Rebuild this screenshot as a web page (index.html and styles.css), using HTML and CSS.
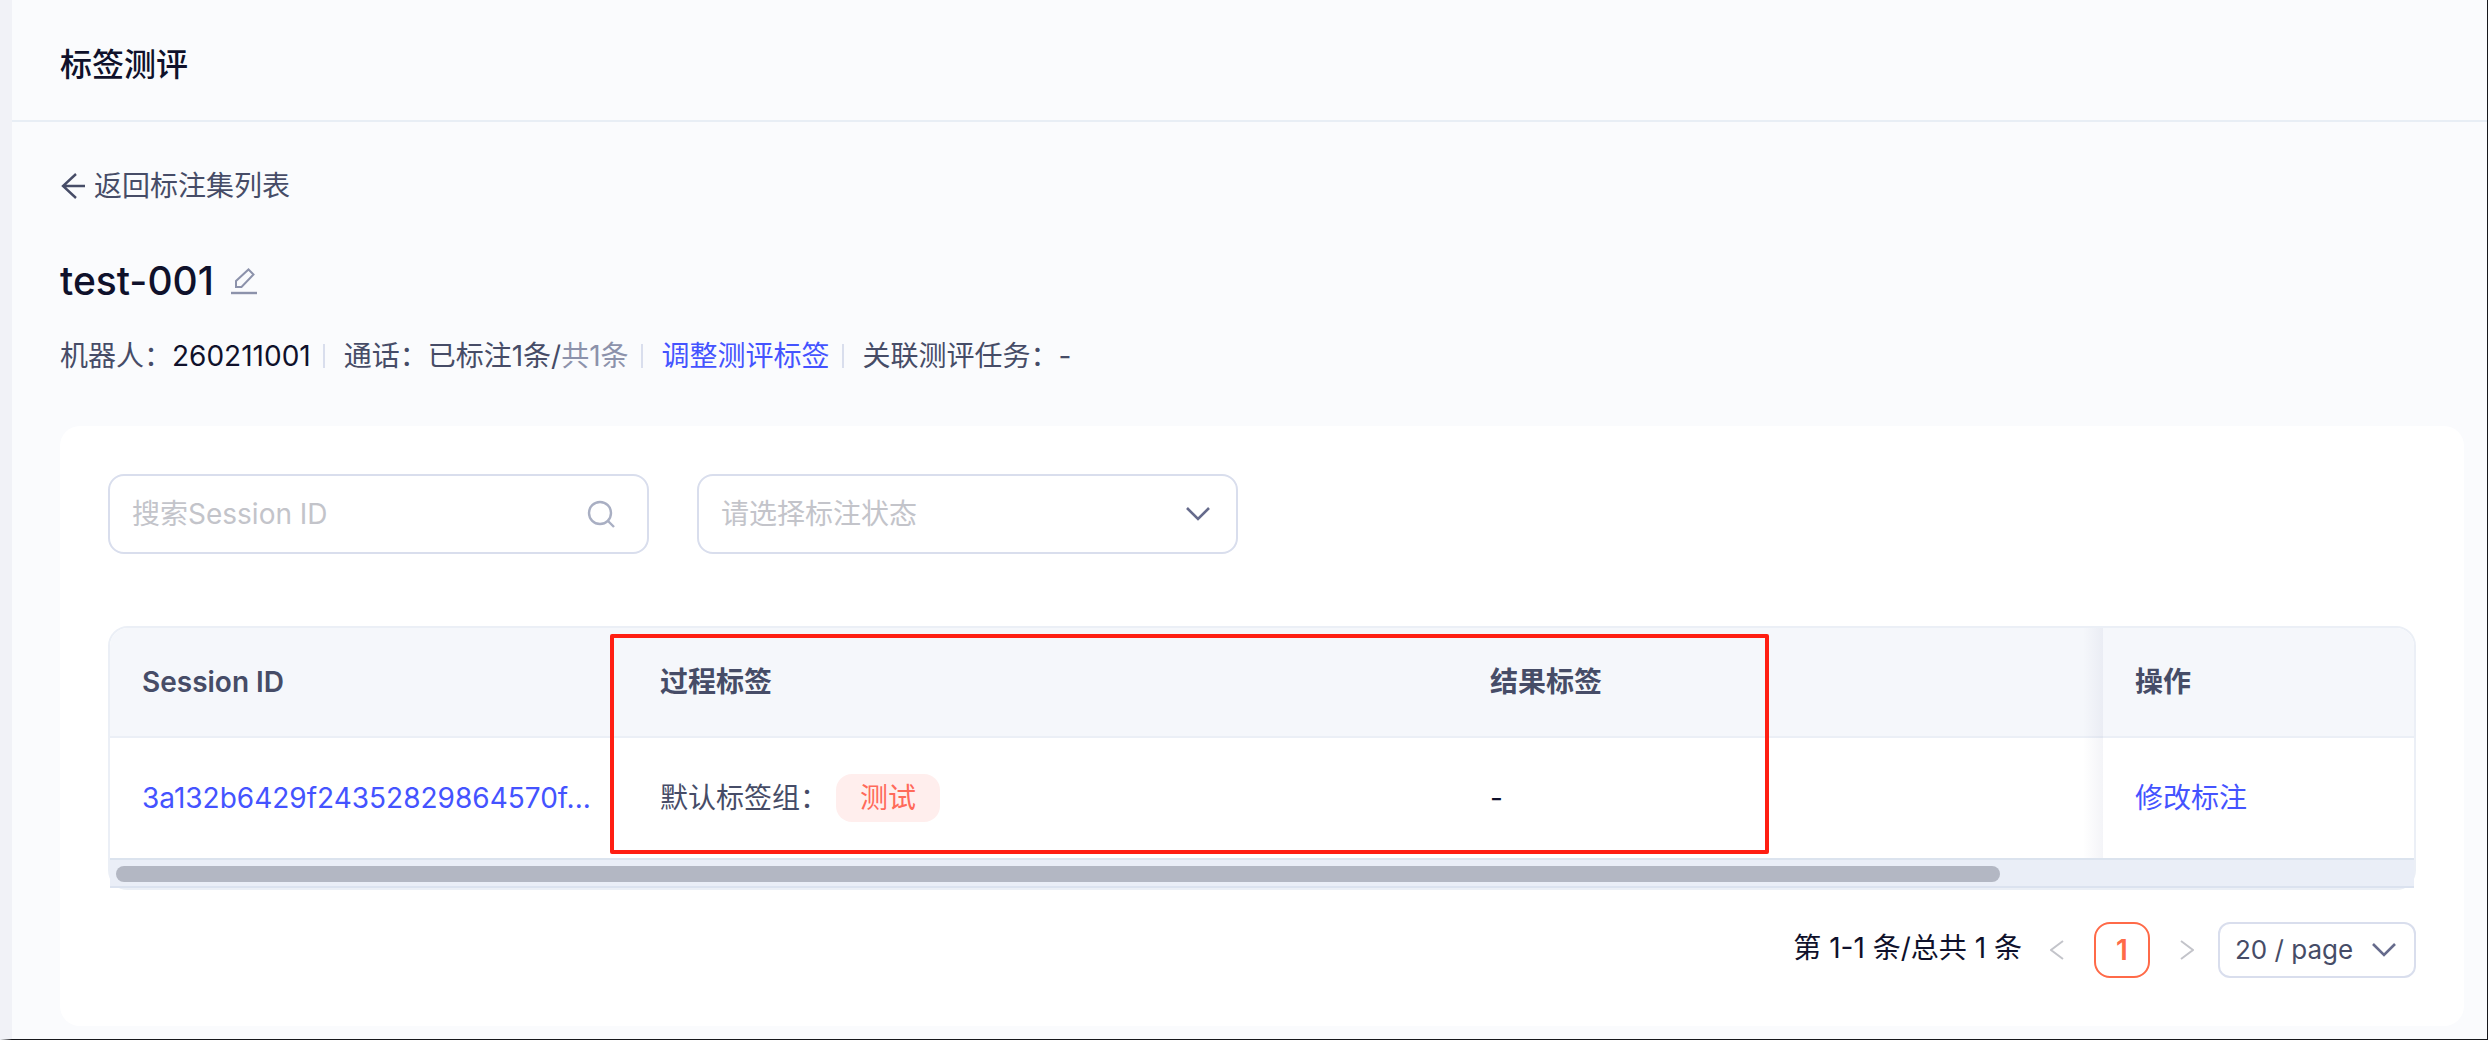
FILE: index.html
```html
<!DOCTYPE html>
<html lang="zh-CN">
<head>
  <meta charset="utf-8">
  <title>标签测评</title>
  <link rel="stylesheet" href="styles.css">
</head>
<body>
  <div class="page">
    <header class="topbar">
      <h1 class="topbar-title">标签测评</h1>
    </header>
    <main class="content">
      <a class="back" href="#">
        <svg class="back-icon" viewBox="0 0 28 28" width="28" height="28" fill="none" stroke="currentColor" stroke-width="2.4"><path d="M25 14H3M16 2L3 14l13 12"/></svg>
        <span>返回标注集列表</span>
      </a>
      <div class="name-row">
        <h2 class="name">test-001</h2>
        <button class="edit" type="button" aria-label="编辑名称">
          <svg viewBox="0 0 28 28" width="28" height="28" fill="none" stroke="currentColor" stroke-width="2"><path d="M1 26h26" stroke-width="2.4"/><path d="M6 20v-6L18.500 2.500l5 5L11.500 20z"/></svg>
        </button>
      </div>
      <div class="meta">
        <span class="meta-item">机器人：<span class="strong">260211001</span></span>
        <span class="meta-item">通话：已标注1条/<span class="muted">共1条</span></span>
        <a class="meta-item link" href="#">调整测评标签</a>
        <span class="meta-item">关联测评任务：-</span>
      </div>

      <section class="panel">
        <form class="filters">
          <label class="field">
            <input class="field-input" type="text" placeholder="搜索Session ID" aria-label="搜索Session ID">
            <svg class="search-icon" viewBox="0 0 28 28" width="28" height="28" fill="none" stroke="currentColor" stroke-width="2.4"><circle cx="13" cy="13" r="11"/><path d="M21 21l6 6"/></svg>
          </label>
          <div class="select-box">
            <select class="select status" aria-label="标注状态">
              <option>请选择标注状态</option>
            </select>
            <svg class="chevron" viewBox="0 0 24 16" width="24" height="16" fill="none" stroke="currentColor" stroke-width="2.600"><path d="M1 2l11 11L23 2"/></svg>
          </div>
        </form>

        <div class="table-wrap">
          <table class="table">
            <colgroup>
              <col class="col-session"><col class="col-process"><col><col class="col-action">
            </colgroup>
            <thead>
              <tr><th>Session ID</th><th>过程标签</th><th>结果标签</th><th class="fixed">操作</th></tr>
            </thead>
            <tbody>
              <tr>
                <td class="session"><a class="link" href="#">3a132b6429f24352829864570f...</a></td>
                <td><div class="group">默认标签组：<span class="tag">测试</span></div></td>
                <td class="strong">-</td>
                <td class="fixed"><a class="link" href="#">修改标注</a></td>
              </tr>
            </tbody>
          </table>
          <div class="scrollbar"><div class="thumb"></div></div>
          <div class="highlight"></div>
        </div>

        <nav class="pager" aria-label="分页">
          <span class="total">第 1-1 条/总共 1 条</span>
          <button class="arrow" type="button" aria-label="上一页" disabled><svg viewBox="0 0 14 20" width="14" height="20" fill="none" stroke="currentColor" stroke-width="2"><path d="M13 1L1 10l12 9"/></svg></button>
          <button class="current" type="button" aria-current="page">1</button>
          <button class="arrow" type="button" aria-label="下一页" disabled><svg viewBox="0 0 14 20" width="14" height="20" fill="none" stroke="currentColor" stroke-width="2"><path d="M1 1l12 9L1 19"/></svg></button>
          <div class="select-box small">
            <select class="select" aria-label="每页条数"><option>20 / page</option></select>
            <svg class="chevron" viewBox="0 0 24 16" width="24" height="16" fill="none" stroke="currentColor" stroke-width="2.600"><path d="M1 2l11 11L23 2"/></svg>
          </div>
        </nav>
      </section>
    </main>
  </div>
</body>
</html>
```
FILE: styles.css
```css
* { box-sizing: border-box; }

body {
  margin: 0;
  background: #fafbfd;
  color: #464c67;
  font: 400 28px/44px Inter, "Noto Sans CJK SC", sans-serif;
}

button, input, select { font: inherit; color: inherit; }
button { padding: 0; border: 0; background: none; }
svg { display: block; flex: none; }

.page {
  min-height: 100vh;
  border-left: 12px solid #f1f2f7;
  border-right: 1px solid #17181c;
  border-bottom: 1px solid #17181c;
}

.topbar {
  padding: 41px 48px 31px;
  border-bottom: 2px solid #e8eef5;
}
.topbar-title {
  height: 48px;
  margin: 0;
  color: #0f112b;
  font-size: 32px;
  font-weight: 500;
  line-height: 48px;
}

.content { padding: 40px 23px 13px 48px; }

.back {
  display: flex;
  align-items: center;
  gap: 6px;
  width: max-content;
  height: 48px;
  color: inherit;
  text-decoration: none;
}

.name-row {
  display: flex;
  align-items: center;
  gap: 16px;
  margin-top: 43px;
}
.name {
  margin: 0;
  color: #0f112b;
  font-size: 39px;
  font-weight: 500;
  line-height: 56px;
}
.edit { color: #8c92ab; }

.meta {
  display: flex;
  align-items: center;
  height: 44px;
  margin: 25px 0 48px;
}
.meta-item + .meta-item {
  display: flex;
  align-items: center;
}
.meta-item + .meta-item::before {
  content: "";
  width: 2px;
  height: 24px;
  margin: 0 19px 0 12px;
  background: #d9deed;
}
.strong { color: #0f112b; }
.muted { color: #8c92ab; }
.link { color: #4453ff; text-decoration: none; }

.panel {
  padding: 48px;
  border-radius: 20px;
  background: #fff;
}

.filters {
  display: flex;
  gap: 48px;
  margin-bottom: 72px;
}
.field, .select-box {
  width: 541px;
  height: 80px;
  border: 2px solid #d9deed;
  border-radius: 16px;
  background: #fff;
}
.field {
  display: flex;
  align-items: center;
  padding: 0 32px 0 22px;
}
.field-input {
  flex: 1;
  min-width: 0;
  padding: 0;
  border: 0;
  outline: 0;
  background: none;
}
.field-input::placeholder { color: #c3c4ca; opacity: 1; }
.search-icon { color: #a9afc3; }

.select-box {
  display: grid;
  align-items: center;
}
.select, .chevron { grid-area: 1 / 1; }
.select {
  width: 100%;
  height: 100%;
  padding: 0 64px 0 22px;
  border: 0;
  outline: 0;
  appearance: none;
  background: none;
}
.status { color: #c3c4ca; }
.chevron {
  justify-self: end;
  margin-right: 26px;
  color: #666b8c;
  pointer-events: none;
}

.table-wrap {
  position: relative;
  border: 2px solid #ebeff6;
  border-radius: 20px;
}
.table {
  width: 100%;
  table-layout: fixed;
  border-collapse: separate;
  border-spacing: 0;
}
.col-session { width: 518px; }
.col-process { width: 830px; }
.col-action { width: 311px; }
.table th, .table td {
  padding: 0 32px;
  text-align: left;
}
.table th {
  height: 110px;
  border-bottom: 2px solid #ebeff6;
  background: #f5f7fb;
  font-weight: 600;
}
.table th:first-child { border-top-left-radius: 18px; }
.table th:last-child { border-top-right-radius: 18px; }
.table td { height: 120px; }
.table .session {
  padding-right: 16px;
  white-space: nowrap;
}
.fixed { position: relative; }
.fixed::before {
  content: "";
  position: absolute;
  top: 0;
  bottom: 0;
  right: 100%;
  width: 20px;
  background: linear-gradient(to left, rgba(60, 70, 130, .06), rgba(60, 70, 130, 0));
}
th.fixed::before { bottom: -2px; }

.group {
  display: flex;
  align-items: center;
  gap: 8px;
}
.tag {
  height: 48px;
  padding: 0 24px;
  border-radius: 16px;
  background: #ffeeed;
  color: #ff6a5a;
  line-height: 48px;
}

.scrollbar {
  height: 30px;
  padding: 6px;
  border-top: 2px solid #dbe3ee;
  border-bottom: 2px solid #dbe2ef;
  background: #eaeef7;
}
.thumb {
  width: 82.2%;
  height: 16px;
  border-radius: 8px;
  background: #b3b7c3;
}

.highlight {
  position: absolute;
  top: 6px;
  left: 500px;
  width: 1159px;
  height: 220px;
  border: 4px solid #ff1e12;
  border-radius: 2px;
  pointer-events: none;
}

.pager {
  display: flex;
  align-items: center;
  justify-content: flex-end;
  height: 56px;
  margin-top: 32px;
}
.total { margin-right: 28px; padding-bottom: 4px; color: #0f112b; }
.arrow { color: #c3c4ca; }
.current {
  width: 56px;
  height: 56px;
  margin: 0 30px;
  border: 2px solid #ff6a48;
  border-radius: 16px;
  color: #ff6a48;
  font-weight: 600;
}
.small {
  width: 198px;
  height: 56px;
  margin-left: 24px;
  border-radius: 12px;
  font-size: 26px;
}
.small .select { padding: 0 48px 0 15px; }
.small .chevron { margin-right: 18px; }
```
